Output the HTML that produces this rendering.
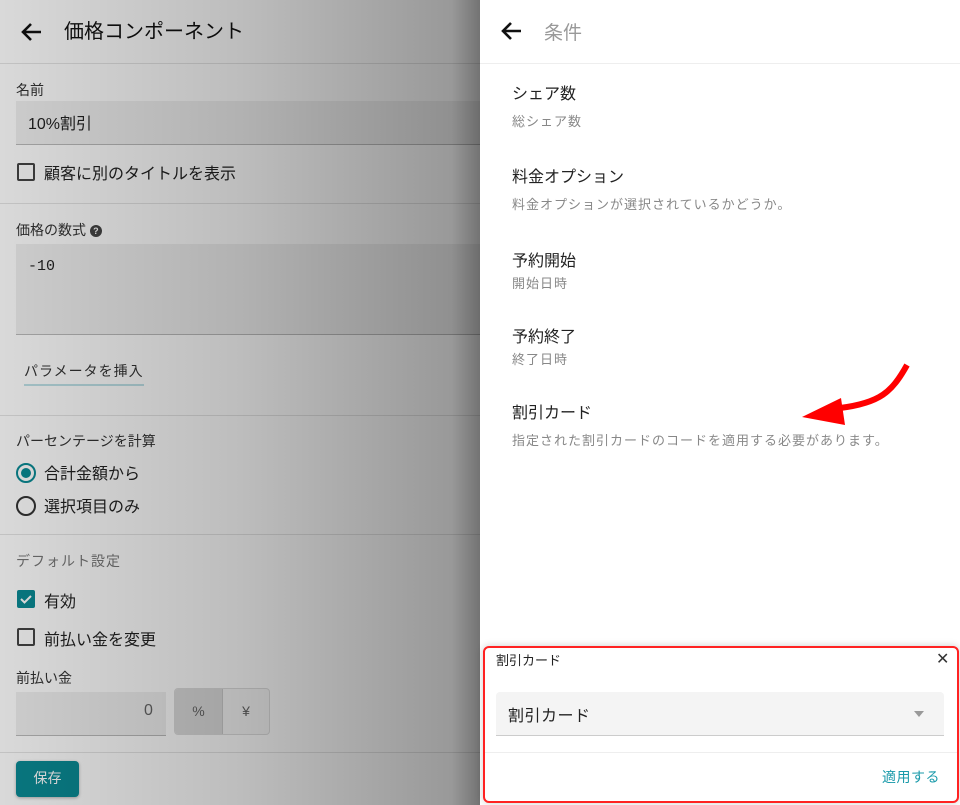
<!DOCTYPE html>
<html><head><meta charset="utf-8"><style>
*{box-sizing:border-box;margin:0;padding:0}
body{width:960px;height:805px;overflow:hidden;font-family:"Liberation Sans","Noto Sans CJK JP",sans-serif;background:#fff;position:relative;color:#222}
.a{position:absolute;white-space:nowrap}
.left{position:absolute;left:0;top:0;width:480px;height:805px;background:#fff}
.ov{position:absolute;left:0;top:0;width:480px;height:805px;background:linear-gradient(90deg,rgba(0,0,0,.15) 0%,rgba(0,0,0,.26) 50%,rgba(0,0,0,.4) 94%,rgba(0,0,0,.55) 100%)}
.hr{position:absolute;left:0;width:480px;height:1px;background:#e4e4e4}
.inp{position:absolute;background:#f0f0f0;border-bottom:1px solid #bbb}
.cb{position:absolute;width:18px;height:18px;border:2px solid #444;border-radius:2px}
.lbl{font-size:14px;color:#333}
.t{font-size:16px;color:#222}
.s{font-size:13px;color:#888;letter-spacing:1px}
</style></head><body>
<div class="left">
<svg class="a" style="left:20px;top:20px" width="24" height="24" viewBox="0 0 24 24"><path d="M21 12H4M11 4l-8 8 8 8" stroke="#111" stroke-width="2.6" fill="none"/></svg>
<div class="a" style="left:64px;top:15px;font-size:20px;color:#111">価格コンポーネント</div>
<div class="hr" style="top:63px"></div>
<div class="a lbl" style="left:16px;top:80px">名前</div>
<div class="inp" style="left:16px;top:101px;width:464px;height:44px"></div>
<div class="a" style="left:28px;top:110px;font-size:16px">10%割引</div>
<div class="cb" style="left:17px;top:163px"></div>
<div class="a" style="left:44px;top:160px;font-size:16px">顧客に別のタイトルを表示</div>
<div class="hr" style="top:203px"></div>
<div class="a lbl" style="left:16px;top:220px">価格の数式 <span style="display:inline-block;width:12px;height:12px;border-radius:50%;background:#444;color:#fff;font-size:9px;text-align:center;line-height:12px;font-weight:bold;vertical-align:1px">?</span></div>
<div class="inp" style="left:16px;top:244px;width:464px;height:91px"></div>
<div class="a" style="left:28px;top:258px;font-size:15px;font-family:'Liberation Mono',monospace">-10</div>
<div class="a" style="left:24px;top:361px;font-size:14px;color:#333;letter-spacing:1px;border-bottom:2px solid #bde0e6;padding-bottom:3px">パラメータを挿入</div>
<div class="hr" style="top:415px"></div>
<div class="a lbl" style="left:16px;top:431px">パーセンテージを計算</div>
<div class="a" style="left:16px;top:463px;width:20px;height:20px;border:2px solid #0a8a94;border-radius:50%"><div style="margin:3px;width:10px;height:10px;border-radius:50%;background:#0a8a94"></div></div>
<div class="a" style="left:44px;top:460px;font-size:16px">合計金額から</div>
<div class="a" style="left:16px;top:496px;width:20px;height:20px;border:2px solid #333;border-radius:50%"></div>
<div class="a" style="left:44px;top:493px;font-size:16px">選択項目のみ</div>
<div class="hr" style="top:534px"></div>
<div class="a" style="left:16px;top:551px;font-size:14px;color:#777;letter-spacing:1px">デフォルト設定</div>
<div class="a" style="left:17px;top:590px;width:18px;height:18px;background:#0a8a94;border-radius:2px"><svg width="18" height="18"><path d="M4 9l3.5 3.5L14 6" stroke="#fff" stroke-width="2" fill="none"/></svg></div>
<div class="a" style="left:44px;top:588px;font-size:16px">有効</div>
<div class="cb" style="left:17px;top:628px"></div>
<div class="a" style="left:44px;top:626px;font-size:16px">前払い金を変更</div>
<div class="a lbl" style="left:16px;top:668px">前払い金</div>
<div class="inp" style="left:16px;top:692px;width:150px;height:44px"></div>
<div class="a" style="left:144px;top:702px;font-size:16px;color:#666">0</div>
<div class="a" style="left:174px;top:688px;width:96px;height:47px;border:1px solid #ddd;border-radius:4px;background:#f6f6f6;overflow:hidden"><div style="width:48px;height:100%;background:#ddd;border-right:1px solid #ccc;float:left;text-align:center;line-height:45px;color:#666;font-size:14px">%</div><div style="float:left;width:46px;text-align:center;line-height:45px;color:#666;font-size:14px">¥</div></div>
<div class="hr" style="top:752px"></div>
<div class="a" style="left:16px;top:761px;width:63px;height:36px;background:#0a8a94;border-radius:4px;color:#fff;font-size:14px;text-align:center;line-height:34px;box-shadow:0 1px 3px rgba(0,0,0,.3)">保存</div>
</div>
<div class="ov"></div>
<svg class="a" style="left:500px;top:19px" width="24" height="24" viewBox="0 0 24 24"><path d="M21 12H4M11 4l-8 8 8 8" stroke="#111" stroke-width="2.6" fill="none"/></svg>
<div class="a" style="left:544px;top:18px;font-size:19px;color:#999">条件</div>
<div class="a" style="left:480px;top:63px;width:480px;height:1px;background:#eee"></div>
<div class="a t" style="left:512px;top:80px">シェア数</div>
<div class="a s" style="left:512px;top:111px">総シェア数</div>
<div class="a t" style="left:512px;top:163px">料金オプション</div>
<div class="a s" style="left:512px;top:194px">料金オプションが選択されているかどうか。</div>
<div class="a t" style="left:512px;top:247px">予約開始</div>
<div class="a s" style="left:512px;top:273px">開始日時</div>
<div class="a t" style="left:512px;top:323px">予約終了</div>
<div class="a s" style="left:512px;top:349px">終了日時</div>
<div class="a t" style="left:512px;top:399px">割引カード</div>
<div class="a s" style="left:512px;top:430px">指定された割引カードのコードを適用する必要があります。</div>
<svg class="a" style="left:780px;top:350px" width="150" height="80"><path d="M127 15C112 42 100 53 60 58" stroke="#f00" stroke-width="6" fill="none"/><path d="M22 67L61 48L65 75Z" fill="#f00"/></svg>
<div class="a" style="left:483px;top:646px;width:476px;height:157px;border:2px solid #f22;border-radius:6px;background:#fff;box-shadow:0 0 8px rgba(0,0,0,.2)"></div>
<div class="a" style="left:496px;top:650px;font-size:13px">割引カード</div>
<div class="a" style="left:936px;top:649px;font-size:16px;color:#333">✕</div>
<div class="a" style="left:496px;top:692px;width:448px;height:44px;background:#f4f4f4;border-radius:4px 4px 0 0;border-bottom:1px solid #ccc"></div>
<div class="a" style="left:508px;top:702px;font-size:16px;letter-spacing:.5px">割引カード</div>
<div class="a" style="left:914px;top:711px;width:0;height:0;border-left:5px solid transparent;border-right:5px solid transparent;border-top:6px solid #999"></div>
<div class="a" style="left:485px;top:752px;width:472px;height:1px;background:#eee"></div>
<div class="a" style="left:882px;top:767px;font-size:14px;color:#1a9aaa;letter-spacing:.5px">適用する</div>
</body></html>
